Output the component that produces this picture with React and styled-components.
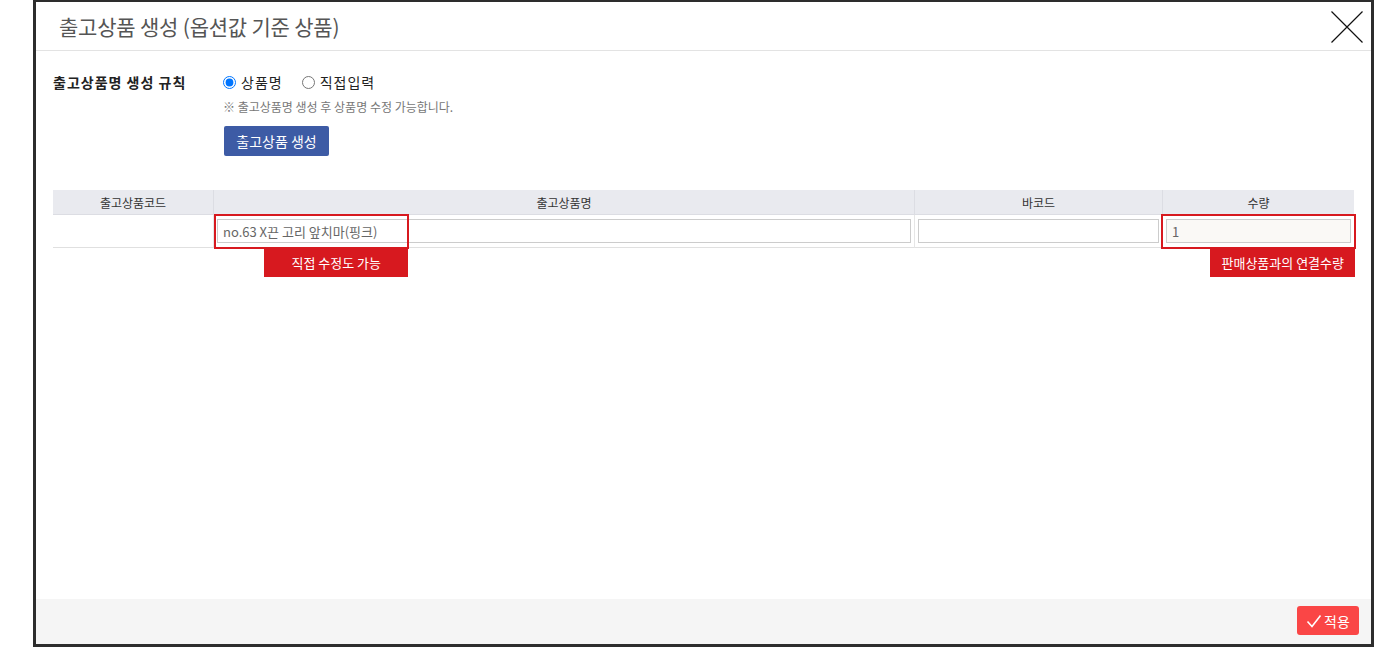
import styled, { createGlobalStyle } from 'styled-components';

const Global = createGlobalStyle`
    html, body {
        margin: 0;
        padding: 0;
        background: #fff;
    }
    body {
        font-family: "Noto Sans CJK KR", "Noto Sans", sans-serif;
        color: #333;
    }
    * { box-sizing: border-box; }
`;

const Page = styled.div`
    padding-left: 33px;
    height: 647px;
`;

const Modal = styled.div`
    width: 1341px;
    height: 647px;
    border: 3px solid #2d2d2d;
    border-top-width: 2px;
    background: #fff;
    display: flex;
    flex-direction: column;
`;

const Header = styled.div`
    height: 49px;
    flex-shrink: 0;
    border-bottom: 1px solid #e3e3e3;
    display: flex;
    align-items: center;
    justify-content: space-between;
    padding: 0 6px 0 23px;
`;

const Title = styled.h1`
    margin: 0;
    font-size: 21px;
    font-weight: 400;
    color: #555;
    letter-spacing: -0.2px;
`;

const Close = styled.button`
    width: 36px;
    height: 36px;
    border: 0;
    background: none;
    padding: 0;
    display: flex;
    align-items: center;
    justify-content: center;
    margin-top: 2px;
`;

const Body = styled.div`
    flex: 1;
    padding: 21px 17px 0;
`;

const RuleRow = styled.div`
    display: flex;
    align-items: flex-start;
`;

const RuleLabel = styled.div`
    width: 170px;
    font-size: 14px;
    font-weight: 700;
    color: #222;
    line-height: 20px;
    letter-spacing: 1px;
`;

const RuleControls = styled.div`
    display: flex;
    flex-direction: column;
    align-items: flex-start;
`;

const Radios = styled.div`
    display: flex;
    gap: 19px;
    height: 20px;
    align-items: center;
`;

const RadioLabel = styled.label`
    display: flex;
    align-items: center;
    gap: 5px;
    font-size: 14px;
    color: #222;
    letter-spacing: 1px;

    input {
        margin: 0;
        width: 13px;
        height: 13px;
    }
`;

const Note = styled.div`
    margin-top: 7px;
    font-size: 12px;
    color: #777;
    line-height: 16px;
`;

const CreateButton = styled.button`
    margin-top: 11px;
    margin-left: 1px;
    width: 105px;
    height: 30px;
    border: 0;
    border-radius: 2px;
    background: #3d5ba5;
    color: #fff;
    font-family: inherit;
    font-size: 14px;
`;

const Table = styled.div`
    margin-top: 34px;
    display: grid;
    grid-template-columns: 160px 701px 248px 192px;
    font-size: 12px;
`;

const HeadCell = styled.div`
    height: 25px;
    background: #e9eaef;
    border-left: ${p => (p.$first ? '0' : '1px solid #dcdde3')};
    border-bottom: 1px solid #dcdde3;
    display: flex;
    align-items: center;
    justify-content: center;
    color: #333;
`;

const Cell = styled.div`
    position: relative;
    height: 33px;
    border-left: ${p => (p.$first ? '0' : '1px solid #e6e6e6')};
    border-bottom: 1px solid #e0e0e0;
    display: flex;
    align-items: center;
    padding: 0 3px;
`;

const Input = styled.input`
    width: 100%;
    height: 24px;
    border: 1px solid #ccc;
    background: ${p => (p.$shaded ? '#faf9f6' : '#fff')};
    padding: 0 5px;
    font-family: inherit;
    font-size: 13px;
    color: #666;
    outline: none;
`;

const Highlight = styled.div`
    position: absolute;
    top: -1px;
    height: 35px;
    border: 2px solid #d7191f;
    pointer-events: none;
    left: ${p => p.$left}px;
    width: ${p => p.$width}px;
`;

const Tag = styled.div`
    position: absolute;
    top: 33px;
    right: ${p => p.$right}px;
    height: 29px;
    padding: 0 ${p => p.$pad}px;
    background: #d7191f;
    color: #fff;
    font-size: 13px;
    display: flex;
    align-items: center;
    white-space: nowrap;
`;

const Footer = styled.div`
    height: 45px;
    flex-shrink: 0;
    background: #f5f5f5;
    display: flex;
    align-items: center;
    justify-content: flex-end;
    padding: 0 12px 2px 0;
`;

const ApplyButton = styled.button`
    height: 29px;
    width: 62px;
    border: 0;
    border-radius: 3px;
    background: #fa4646;
    color: #fff;
    font-family: inherit;
    font-size: 14px;
    display: flex;
    align-items: center;
    justify-content: center;
    gap: 2px;
    padding: 0;
`;

const App = () => {
    return (
        <Page>
            <Global />
            <Modal>
                <Header>
                    <Title>출고상품 생성 (옵션값 기준 상품)</Title>
                    <Close>
                        <svg width="34" height="34" viewBox="0 0 34 34">
                            <path d="M1.5 1.5 L32.5 32.5 M32.5 1.5 L1.5 32.5" stroke="#111" strokeWidth="1.2" fill="none" />
                        </svg>
                    </Close>
                </Header>
                <Body>
                    <RuleRow>
                        <RuleLabel>출고상품명 생성 규칙</RuleLabel>
                        <RuleControls>
                            <Radios>
                                <RadioLabel>
                                    <input type="radio" name="rule" defaultChecked />
                                    상품명
                                </RadioLabel>
                                <RadioLabel>
                                    <input type="radio" name="rule" />
                                    직접입력
                                </RadioLabel>
                            </Radios>
                            <Note>※ 출고상품명 생성 후 상품명 수정 가능합니다.</Note>
                            <CreateButton>출고상품 생성</CreateButton>
                        </RuleControls>
                    </RuleRow>
                    <Table>
                        <HeadCell $first>출고상품코드</HeadCell>
                        <HeadCell>출고상품명</HeadCell>
                        <HeadCell>바코드</HeadCell>
                        <HeadCell>수량</HeadCell>

                        <Cell $first />
                        <Cell>
                            <Input defaultValue="no.63 X끈 고리 앞치마(핑크)" />
                            <Highlight $left={0} $width={195} />
                            <Tag $right={506} $pad={27}>직접 수정도 가능</Tag>
                        </Cell>
                        <Cell>
                            <Input />
                        </Cell>
                        <Cell>
                            <Input $shaded defaultValue="1" />
                            <Highlight $left={-2} $width={195} />
                            <Tag $right={-1} $pad={11}>판매상품과의 연결수량</Tag>
                        </Cell>
                    </Table>
                </Body>
                <Footer>
                    <ApplyButton>
                        <svg width="16" height="16" viewBox="0 0 16 16">
                            <path d="M1.5 8.5 L6 13.5 L14.5 2.5" stroke="#fff" strokeWidth="1.6" fill="none" />
                        </svg>
                        적용
                    </ApplyButton>
                </Footer>
            </Modal>
        </Page>
    );
};

export default App;
